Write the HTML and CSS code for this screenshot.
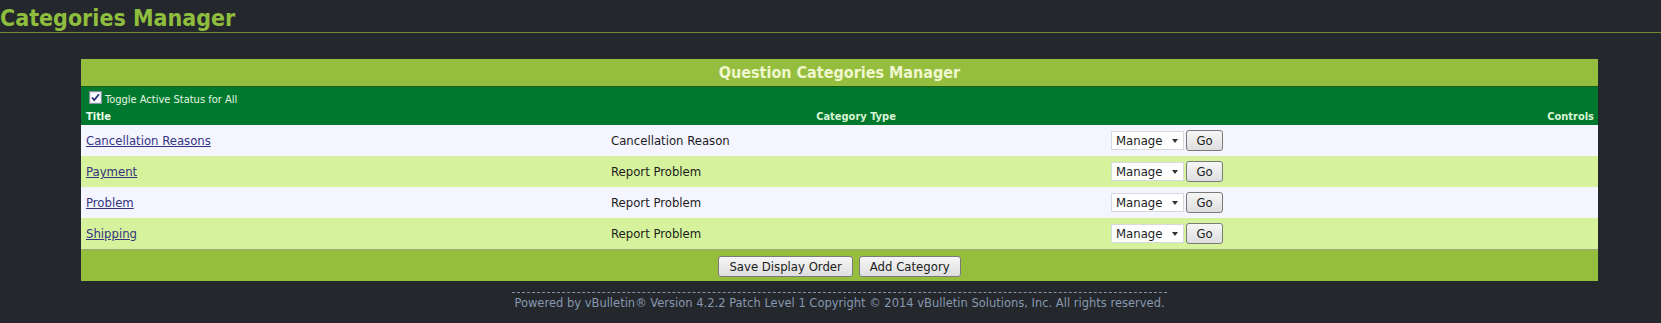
FILE: index.html
```html
<!DOCTYPE html>
<html lang="en">
  <head>
    <meta charset="UTF-8" />
    <title>Categories Manager</title>
    <link rel="stylesheet" href="styles.css">
  </head>

  <body>
    <h1 class="page-title">Categories Manager</h1>

    <div class="wrap">
      <table class="tborder">
        <colgroup>
          <col class="col-title" />
          <col class="col-type" />
          <col />
        </colgroup>
        <tr>
          <td class="tcat" colspan="3">Question Categories Manager</td>
        </tr>
        <tr class="thead toggle-row">
          <td colspan="3">
            <label class="toggle">
              <svg class="check" width="13" height="13" viewBox="0 0 13 13">
                <rect x="0.5" y="0.5" width="12" height="12" fill="#ffffff" stroke="#8a94a6" />
                <rect x="1.5" y="1.5" width="10" height="10" fill="none" stroke="#dfe3ea" />
                <path d="M3 6.5 L5.2 9 L10 3.2" fill="none" stroke="#22307a" stroke-width="1.8" />
              </svg>
              <span class="toggle-text">Toggle Active Status for All</span>
            </label>
          </td>
        </tr>
        <tr class="thead heads">
          <th class="left">Title</th>
          <th class="center">Category Type</th>
          <th class="right">Controls</th>
        </tr>
        <tr class="alt1">
          <td><a href="#">Cancellation Reasons</a></td>
          <td>Cancellation Reason</td>
          <td>
            <div class="controls">
              <span class="select-wrap"><select><option>Manage</option></select></span><button class="btn go">Go</button>
            </div>
          </td>
        </tr>
        <tr class="alt2">
          <td><a href="#">Payment</a></td>
          <td>Report Problem</td>
          <td>
            <div class="controls">
              <span class="select-wrap"><select><option>Manage</option></select></span><button class="btn go">Go</button>
            </div>
          </td>
        </tr>
        <tr class="alt1">
          <td><a href="#">Problem</a></td>
          <td>Report Problem</td>
          <td>
            <div class="controls">
              <span class="select-wrap"><select><option>Manage</option></select></span><button class="btn go">Go</button>
            </div>
          </td>
        </tr>
        <tr class="alt2">
          <td><a href="#">Shipping</a></td>
          <td>Report Problem</td>
          <td>
            <div class="controls">
              <span class="select-wrap"><select><option>Manage</option></select></span><button class="btn go">Go</button>
            </div>
          </td>
        </tr>
        <tr>
          <td class="tfoot" colspan="3">
            <div class="submit-row">
              <button class="btn">Save Display Order</button>
              <button class="btn">Add Category</button>
            </div>
          </td>
        </tr>
      </table>

      <div class="copyright">
        <span>Powered by vBulletin® Version 4.2.2 Patch Level 1 Copyright © 2014 vBulletin Solutions, Inc. All rights reserved.</span>
      </div>
    </div>
  </body>
</html>
```

FILE: styles.css
```css
* {
  margin: 0;
  padding: 0;
  box-sizing: border-box;
}

body {
  background: #24272b;
  font-family: "DejaVu Sans Condensed", "DejaVu Sans", sans-serif;
  font-stretch: condensed;
  color: #1c1c1c;
}

.page-title {
  font-size: 23px;
  line-height: 27px;
  padding-top: 5px;
  font-weight: bold;
  color: #8fbd3e;
  border-bottom: 1px solid #6f8c31;
}

.wrap {
  margin: 26px 63px 0 81px;
}

.tborder {
  width: 100%;
  border-collapse: collapse;
  table-layout: fixed;
}

.col-title {
  width: 525px;
}

.col-type {
  width: 500px;
}

td,
th {
  padding: 0 5px;
  font-size: 13px;
  text-align: left;
}

.tcat {
  height: 27px;
  background: #95be3e;
  color: #f0f7cf;
  font-size: 16px;
  font-weight: bold;
  text-align: center;
}

.thead td,
.thead th {
  background: #00792e;
  color: #e6f5e6;
  font-size: 11px;
}

.toggle-row td {
  height: 23px;
  border-top: 1px solid #1d5e16;
  padding-top: 4px;
  vertical-align: top;
}

.toggle {
  display: flex;
  align-items: flex-start;
  gap: 3px;
  padding-left: 3px;
  line-height: 13px;
}

.toggle-text {
  margin-top: 2px;
}

.check {
  display: block;
}

.heads th {
  height: 16px;
  line-height: 13px;
  padding-top: 1px;
  font-weight: bold;
  color: #d8f4d4;
  vertical-align: top;
}

.heads th.left {
  color: #eaffea;
}

.heads th.center {
  text-align: center;
}

.heads th.right {
  text-align: right;
  padding-right: 4px;
}

.alt1 td,
.alt2 td {
  height: 31px;
  vertical-align: middle;
}

.alt1 td {
  background: #f5f5ff;
}

.alt2 td {
  background: #d7f29c;
}

a {
  color: #34347f;
  text-decoration: underline;
}

.controls {
  display: flex;
  align-items: center;
  gap: 2px;
}

.select-wrap {
  position: relative;
  display: block;
}

.select-wrap::after {
  content: "";
  position: absolute;
  right: 6px;
  top: 8px;
  border-left: 3px solid transparent;
  border-right: 3px solid transparent;
  border-top: 4px solid #333333;
}

select {
  appearance: none;
  display: block;
  width: 73px;
  height: 19px;
  padding: 0 0 0 4px;
  background: #ffffff;
  border: 1px solid #d6d9de;
  border-radius: 0;
  font-family: inherit;
  font-size: 13px;
  color: #222222;
}

.btn {
  height: 21px;
  padding: 0 10px;
  background: linear-gradient(to bottom, #f6f6f6, #dedede);
  border: 1px solid #7a7a7a;
  border-radius: 3px;
  font-family: inherit;
  font-size: 13px;
  color: #1c1c1c;
}

.btn.go {
  width: 37px;
  padding: 0;
}

.tfoot {
  height: 32px;
  background: #95be3c;
  border-top: 1px solid #9cad7e;
}

.submit-row {
  display: flex;
  justify-content: center;
  gap: 6px;
  padding-top: 2px;
}

.copyright {
  text-align: center;
  margin-top: 11px;
}

.copyright span {
  display: inline-block;
  border-top: 1px dashed #8393a9;
  padding: 3px 2px 0;
  font-family: "DejaVu Sans", sans-serif;
  font-stretch: normal;
  font-size: 11.5px;
  color: #8798af;
}
```
